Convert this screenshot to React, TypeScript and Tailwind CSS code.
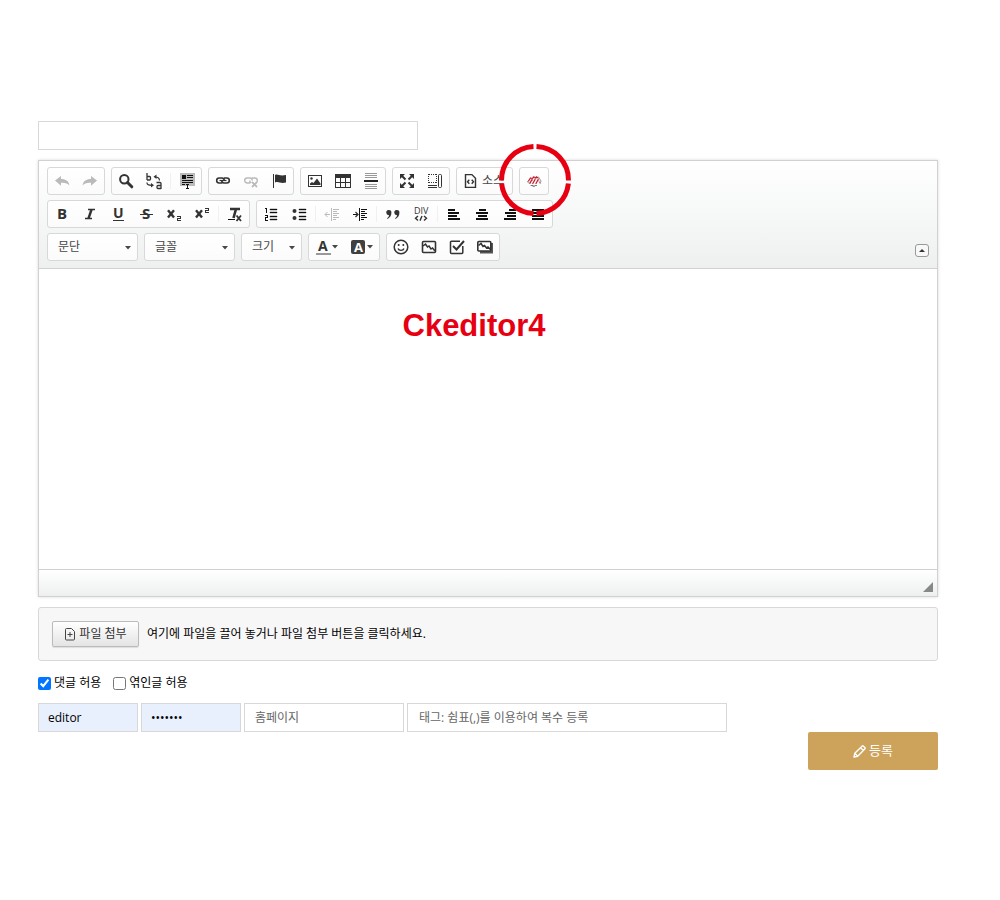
import type { ReactNode } from "react";

function Icon({ children, muted }: { children: ReactNode; muted?: boolean }) {
  return (
    <svg
      width="16"
      height="16"
      viewBox="0 0 16 16"
      fill="none"
      stroke="currentColor"
      className={`overflow-visible ${muted ? "text-[#bababa]" : "text-[#333]"}`}
      aria-hidden="true"
    >
      {children}
    </svg>
  );
}

function Solid({ d }: { d: string }) {
  return <path d={d} fill="currentColor" stroke="none" />;
}

function Crisp({ d, color }: { d: string; color?: string }) {
  return <path d={d} stroke={color ?? "currentColor"} shapeRendering="crispEdges" />;
}

function Glyph({
  x,
  y,
  size,
  children,
  bold = true,
}: {
  x: number;
  y: number;
  size: number;
  children: string;
  bold?: boolean;
}) {
  return (
    <text
      x={x}
      y={y}
      fontSize={size}
      fontWeight={bold ? 700 : 400}
      fontFamily="Open Sans, sans-serif"
      fill="currentColor"
      stroke="none"
    >
      {children}
    </text>
  );
}

function Group({ children }: { children: ReactNode }) {
  return (
    <div className="relative flex h-7 items-center rounded-[3px] border border-[#d8d8d8] bg-linear-to-b from-white to-[#fbfbfb]">
      {children}
    </div>
  );
}

function Separator() {
  return <span className="mx-[2px] h-4 w-px bg-[#f0f0f0]" />;
}

function ToolButton({
  label,
  children,
  muted,
}: {
  label: string;
  children: ReactNode;
  muted?: boolean;
}) {
  return (
    <button
      type="button"
      aria-label={label}
      disabled={muted}
      className="flex h-[26px] w-7 items-center justify-center"
    >
      <Icon muted={muted}>{children}</Icon>
    </button>
  );
}

function Caret() {
  return (
    <svg width="6" height="4" viewBox="0 0 6 4" fill="#474747" aria-hidden="true">
      <path d="M0 0h6L3 3.5z" />
    </svg>
  );
}

function ColorButton({ label, children }: { label: string; children: ReactNode }) {
  return (
    <button
      type="button"
      aria-label={label}
      className="flex h-[26px] w-[35px] items-center justify-center gap-px"
    >
      <Icon>{children}</Icon>
      <Caret />
    </button>
  );
}

function Combo({ label, wide }: { label: string; wide?: boolean }) {
  return (
    <Group>
      <select
        aria-label={label}
        className={`h-[26px] appearance-none bg-transparent pl-[10px] text-[12px] text-[#474747] outline-none ${
          wide ? "w-[89px]" : "w-[59px]"
        }`}
      >
        <option>{label}</option>
      </select>
      <span className="pointer-events-none absolute top-[12px] right-[6px]">
        <Caret />
      </span>
    </Group>
  );
}

const chain =
  "M7 10H4.2a2.4 2.4 0 0 1 0-5H7a2.4 2.4 0 0 1 2.2 2.5M9 5h2.8a2.4 2.4 0 0 1 0 5H9a2.4 2.4 0 0 1-2.2-2.5";

function Toolbar() {
  return (
    <div className="flex items-end justify-between border-b border-[#d1d1d1] bg-linear-to-b from-white to-[#eef0f0] px-2 pt-[6px] pb-[7px]">
      <div className="flex flex-col gap-[5px]">
        <div className="flex flex-wrap gap-[6px]">
          <Group>
            <ToolButton label="실행 취소" muted>
              <Solid d="M1 7.6 7 3v3c5 0 8 2.3 8.4 6.5C13.5 10.2 11 9.5 7 9.8v3z" />
            </ToolButton>
            <ToolButton label="다시 실행" muted>
              <Solid d="M15 7.6 9 3v3C4 6 1 8.3.6 12.5 2.5 10.2 5 9.5 9 9.8v3z" />
            </ToolButton>
          </Group>
          <Group>
            <ToolButton label="찾기">
              <circle cx="6.3" cy="6.3" r="4.2" strokeWidth="2" />
              <path d="m9.5 9.5 4.3 4.3" strokeWidth="3" strokeLinecap="round" />
            </ToolButton>
            <ToolButton label="바꾸기">
              <path d="M1 0v7M1 3.5h2.5q1 0 1 1V6q0 1-1 1H1" strokeWidth="1.3" />
              <path d="M10.5 9.5H14q1 0 1 1V16M15 12.5h-3q-1 0-1 1v1q0 1 1 1h3" strokeWidth="1.3" />
              <path d="M9 4c3 0 4.5 1 4.5 3.5M1 9.5v.5c0 1.500 1 2.3 5 2.3" strokeWidth="1.2" />
              <Solid d="M10.5 1.5V6L7.5 3.8zM5 10v4.500l3-2.200z" />
            </ToolButton>
            <Separator />
            <ToolButton label="전체 선택">
              <path d="M1 0h15v13H1z" fill="#bbb" stroke="none" />
              <path d="M3 2h4v4H3z" fill="#111" stroke="none" />
              <Crisp color="#111" d="M8 2.5h6M8 4.5h6M3 7.5h11M3 9.5h11M3 11.5h3M7 11.5h3M8.500 12v3M7 15.500h3" />
            </ToolButton>
          </Group>
          <Group>
            <ToolButton label="링크 삽입">
              <path d={chain} strokeWidth="1.6" />
              <path d="M4.5 7.5h7" strokeWidth="1.2" />
            </ToolButton>
            <ToolButton label="링크 지우기" muted>
              <path d={chain} strokeWidth="1.4" />
              <path d="m9 9 5 5m0-5-5 5" stroke="#fff" strokeWidth="4" />
              <path d="m9 9 5 5m0-5-5 5" strokeWidth="1.8" />
            </ToolButton>
            <ToolButton label="책갈피">
              <Crisp d="M2.5 1v14" />
              <Solid d="M4 2c3-1.5 4 1.5 11 0v7.5c-6 1.5-7-1.5-11 0z" />
            </ToolButton>
          </Group>
          <Group>
            <ToolButton label="이미지">
              <Crisp d="M1.5 2.5h13v11h-13z" />
              <circle cx="4.5" cy="5.5" r="1.2" fill="currentColor" stroke="none" />
              <Solid d="M3 12v-1.500L5 9l1.500 1L10 5.500l3.500 5V12z" />
            </ToolButton>
            <ToolButton label="표">
              <path d="M0 1h16v4H0z" fill="currentColor" stroke="none" />
              <Crisp d="M.5 1.5h15v13H.5zM0 9.500h16M5.500 5v10M10.500 5v10" />
            </ToolButton>
            <ToolButton label="가로 줄">
              <Crisp d="M2 .5h12M2 2.5h12M2 4.5h12M2 11.5h12M2 13.5h12M2 15.5h12" color="#999" />
              <path d="M1 7h14v2H1z" fill="#222" stroke="none" />
            </ToolButton>
          </Group>
          <Group>
            <ToolButton label="최대화">
              <Solid d="M1 1h5L1 6zM15 1h-5l5 5zM1 15h5l-5-5zM15 15h-5l5-5z" />
              <path d="m2.5 2.5 4 4m7-4-4 4m-7 7 4-4m7 4-4-4" strokeWidth="2" />
            </ToolButton>
            <ToolButton label="블록 보기">
              <path d="M1.5 1v9M9.5 1v9M2 1.5h8M2 9.5h8" strokeDasharray="1 1" />
              <Crisp d="M1 12.5h9M1 14.5h9" />
              <rect x="11.5" y="1.5" width="3" height="13" rx="1" />
            </ToolButton>
          </Group>
          <Group>
            <button
              type="button"
              className="flex h-[26px] w-[55px] items-center gap-1 pl-[5px] text-[12px] text-[#484848]"
            >
              <Icon>
                <path d="M3.5 1.6h6.4l3.6 3.6v9.2h-10z" strokeWidth="1.4" />
                <path d="M7.3 6.8 5.5 8.8l1.8 2M9.7 6.8l1.8 2-1.8 2" strokeWidth="1.4" />
              </Icon>
              <span className="whitespace-nowrap">소스</span>
            </button>
          </Group>
          <Group>
            <ToolButton label="에디터 플러그인">
              <g strokeLinecap="round">
                <path d="m1.500 8.500 1 1.500M12.500 4l2.500 4-.8 2.500" stroke="#999" />
                <path d="M2.500 8 4.500 5l1.500.5M3.800 10.300 7.500 4l1.500.3M6.800 10.500 10.500 4l1.300.8M10 10.500l2.300-4.200" stroke="#c4202f" strokeWidth="1.3" />
                <path d="m6 6 .5 1.500M9 5l.5 1.500M12.500 7l1.200 3" stroke="#d9868c" />
                <path d="M5 12.500h2M9 12.500h1.500M7 13.300h1.500" stroke="#777" />
              </g>
            </ToolButton>
            <svg
              width="72"
              height="72"
              viewBox="0 0 72 72"
              className="pointer-events-none absolute -top-6 -left-[21px] z-10 max-w-none"
              fill="none"
              stroke="#e60012"
              strokeWidth="5"
              aria-hidden="true"
            >
              <path d="M37.5 2.54A33.5 33.5 0 0 1 69.46 36.5M69.4 39.5A33.5 33.5 0 0 1 37.5 69.46M34.5 69.46A33.5 33.5 0 0 1 2.6 39.5M2.54 36.5A33.5 33.5 0 0 1 34.5 2.54" />
            </svg>
          </Group>
        </div>

        <div className="flex flex-wrap gap-[6px]">
          <Group>
            <ToolButton label="굵게">
              <Glyph x={3} y={13} size={15}>B</Glyph>
            </ToolButton>
            <ToolButton label="기울임꼴">
              <path d="M6 3.5h7M3 12.5h7" strokeWidth="1.4" />
              <path d="m9.5 3.5-3 9" strokeWidth="2.4" />
            </ToolButton>
            <ToolButton label="밑줄">
              <Glyph x={3} y={12} size={14}>U</Glyph>
              <Crisp d="M3 14.5h11" />
            </ToolButton>
            <ToolButton label="취소선">
              <Glyph x={4} y={13} size={15}>S</Glyph>
              <Crisp d="M2 8.5h13" />
            </ToolButton>
            <ToolButton label="아래 첨자">
              <path d="M2 4.300 8 11.500M8 4.300 2 11.500" strokeWidth="2.4" />
              <Crisp d="M11 10.500h4M14.500 11v1M11 12.500h4M11.500 13v1M11 14.500h4" />
            </ToolButton>
            <ToolButton label="위 첨자">
              <path d="M2 4.300 8 11.500M8 4.300 2 11.500" strokeWidth="2.4" />
              <Crisp d="M11 2.500h4M14.500 3v1M11 4.500h4M11.500 5v1M11 6.500h4" />
            </ToolButton>
            <Separator />
            <ToolButton label="형식 지우기">
              <path d="M3 3h10M9 3 6.5 12" strokeWidth="2.6" />
              <Crisp d="M1 13.5h7" color="#111" />
              <path d="m9.5 9.5 4.5 5.5m0-5.5L9.500 15" strokeWidth="1.8" />
            </ToolButton>
          </Group>
          <Group>
            <ToolButton label="순서 있는 목록">
              <Crisp
                color="#111"
                d="M2 2.500h2M3.500 2v5M2 9.500h3M4.500 10v1M2 11.500h3M2.500 12v2M2 14.500h3"
              />
              <path d="M7 3h7v1H7zM7 6h7v1H7zM7 10h7v1H7zM7 13h7v1H7z" fill="#111" stroke="#111" strokeWidth=".4" />
            </ToolButton>
            <ToolButton label="순서 없는 목록">
              <circle cx="3.5" cy="5" r="2" fill="currentColor" stroke="none" />
              <circle cx="3.5" cy="12" r="2" fill="currentColor" stroke="none" />
              <path d="M8 3h7v1H8zM8 6h7v1H8zM8 10h7v1H8zM8 13h7v1H8z" fill="#111" stroke="#111" strokeWidth=".4" />
            </ToolButton>
            <Separator />
            <ToolButton label="내어쓰기" muted>
              <Crisp d="M7.5 2v13M9 3.5h6M9 5.5h4M9 7.5h6M9 9.5h4M9 11.5h6M9 13.5h3M1 8.5h5" />
              <path d="M3.5 6 1 8.5 3.5 11" />
            </ToolButton>
            <ToolButton label="들여쓰기">
              <Crisp
                color="#111"
                d="M7.5 2v13M9 3.5h6M9 5.5h4M9 7.5h6M9 9.5h4M9 11.5h6M9 13.5h3M1 8.5h5"
              />
              <path d="M3.5 6 6 8.5 3.5 11" strokeWidth="1.3" />
            </ToolButton>
            <Separator />
            <ToolButton label="인용 단락">
              <Solid d="M3.7 4a2.6 2.6 0 0 1 2.7 2.8C6.4 9.5 5 11.8 2.5 13l-.4-.7c1.3-1 2-2 2-3A2.6 2.6 0 0 1 3.7 4zM11.7 4a2.6 2.6 0 0 1 2.7 2.8c0 2.7-1.4 5-3.9 6.2l-.4-.7c1.3-1 2-2 2-3A2.6 2.6 0 0 1 11.7 4z" />
            </ToolButton>
            <ToolButton label="컨테이너 만들기">
              <Glyph x={1} y={8} size={9} bold={false}>DIV</Glyph>
              <path d="M5 10 2.5 12.300 5 14.600M11 10l2.500 2.300-2.500 2.300M9 10l-2 4.600" strokeWidth="1.4" />
            </ToolButton>
            <Separator />
            <ToolButton label="왼쪽 정렬">
              <path d="M2 3h7v2H2zM2 6h11v2H2zM2 9h9v2H2zM2 12h12v2H2z" fill="#111" stroke="none" />
            </ToolButton>
            <ToolButton label="가운데 정렬">
              <path d="M5 3h7v2H5zM2 6h12v2H2zM4 9h9v2H4zM2 12h12v2H2z" fill="#111" stroke="none" />
            </ToolButton>
            <ToolButton label="오른쪽 정렬">
              <path d="M7 3h7v2H7zM3 6h11v2H3zM5 9h9v2H5zM2 12h12v2H2z" fill="#111" stroke="none" />
            </ToolButton>
            <ToolButton label="양쪽 맞춤">
              <path d="M2 3h12v2H2zM2 6h12v2H2zM2 9h12v2H2zM2 12h12v2H2z" fill="#111" stroke="none" />
            </ToolButton>
          </Group>
        </div>

        <div className="flex flex-wrap gap-[6px]">
          <Combo label="문단" wide />
          <Combo label="글꼴" wide />
          <Combo label="크기" />
          <Group>
            <ColorButton label="글자 색상">
              <Glyph x={3} y={12} size={14}>A</Glyph>
              <path d="M1 14h15v2H1z" fill="#999" stroke="none" />
            </ColorButton>
            <ColorButton label="배경 색상">
              <rect x="1" y="1" width="14" height="14" rx="2" fill="#404040" stroke="none" />
              <g className="text-white">
                <Glyph x={4} y={13} size={13}>A</Glyph>
              </g>
            </ColorButton>
          </Group>
          <Group>
            <ToolButton label="이모티콘">
              <circle cx="8" cy="8" r="6.8" strokeWidth="1.5" />
              <path d="M5 9.5c.8 2.6 5.2 2.6 6 0" strokeWidth="1.3" />
              <circle cx="5.7" cy="6" r="1" fill="currentColor" stroke="none" />
              <circle cx="10.3" cy="6" r="1" fill="currentColor" stroke="none" />
            </ToolButton>
            <ToolButton label="이미지 갤러리">
              <rect x="1.5" y="2.5" width="13" height="11" rx="1" strokeWidth="1.6" />
              <path d="m2 7 2.5-2 2 3L8 7l2 3 1.500-1L14 12" strokeWidth="1.5" />
            </ToolButton>
            <ToolButton label="설문조사">
              <path d="M11 2.200H2.500a1 1 0 0 0-1 1v10.300a1 1 0 0 0 1 1h10.300a1 1 0 0 0 1-1V7" strokeWidth="1.5" />
              <path d="m4 7 3.5 3.5L15 2" strokeWidth="2" />
            </ToolButton>
            <ToolButton label="멀티미디어">
              <path d="M3 12h11V4h2v10.500H3z" fill="#555" stroke="none" />
              <rect x=".8" y="2.5" width="13" height="9.5" rx="1" fill="#fff" strokeWidth="1.6" />
              <path d="m1.500 6.500 2.500-2 2 3 1.500-1 2 2.500 1.500-1 2.500 2.500" strokeWidth="1.6" />
            </ToolButton>
          </Group>
        </div>
      </div>

      <button
        type="button"
        aria-label="툴바 줄이기"
        className="mb-1 flex h-[13px] w-[14px] items-center justify-center rounded-[3px] border border-[#999] bg-[#f8f8f8]"
      >
        <svg width="6" height="3" viewBox="0 0 6 3" fill="#333" aria-hidden="true">
          <path d="M0 3h6L3 0z" />
        </svg>
      </button>
    </div>
  );
}

function Editor() {
  return (
    <section className="mt-[10px] border border-[#d1d1d1] shadow-[0_0_3px_rgba(0,0,0,0.15)]">
      <Toolbar />
      <div className="min-h-[300px] bg-white pt-[39px] pr-7 text-center">
        <h1 className="font-['Liberation_Sans',Arial,sans-serif] text-[31px] leading-9 font-bold text-[#e60012]">
          Ckeditor4
        </h1>
      </div>
      <div className="flex h-[27px] items-end justify-end border-t border-[#d1d1d1] bg-linear-to-b from-white to-[#eef0f0] px-1 pb-1">
        <svg width="10" height="10" viewBox="0 0 10 10" fill="#888" aria-hidden="true">
          <path d="M10 0v10H0z" />
        </svg>
      </div>
    </section>
  );
}

const field =
  "h-[29px] min-w-0 border border-[#d8d8d8] text-[12px] outline-none placeholder:text-[#666]";

export default function App() {
  return (
    <form
      className="flex flex-col bg-white pt-[121px] pr-[62px] pl-[38px] font-['Open_Sans','Noto_Sans_CJK_KR',sans-serif] text-[12px] text-black"
      onSubmit={(e) => e.preventDefault()}
    >
      <input type="text" aria-label="제목" className={`${field} w-[380px] px-[10px]`} />

      <Editor />

      <div className="mt-[10px] flex h-[54px] items-center gap-2 rounded-[3px] border border-[#d8d8d8] bg-[#f7f7f7] px-[13px]">
        <button
          type="button"
          className="flex h-[26px] w-[87px] items-center justify-center gap-[3px] rounded-[2px] border border-[#bbb] bg-linear-to-b from-white to-[#e4e4e4] text-[#333] shadow-[0_1px_1px_rgba(0,0,0,0.1)]"
        >
          <svg width="12" height="13" viewBox="0 0 12 13" fill="none" stroke="#444" aria-hidden="true">
            <path d="M2.5.5h5l3 3V11a1 1 0 0 1-1 1h-7a1 1 0 0 1-1-1V1.500a1 1 0 0 1 1-1z" />
            <path d="M6 4v5M3.5 6.500h5" />
          </svg>
          <span className="whitespace-nowrap">파일 첨부</span>
        </button>
        <span>여기에 파일을 끌어 놓거나 파일 첨부 버튼을 클릭하세요.</span>
      </div>

      <div className="mt-3 flex h-5 items-center gap-3">
        <label className="flex items-center gap-[3px]">
          <input type="checkbox" defaultChecked className="h-[13px] w-[13px]" />
          댓글 허용
        </label>
        <label className="flex items-center gap-[3px]">
          <input type="checkbox" className="h-[13px] w-[13px]" />
          엮인글 허용
        </label>
      </div>

      <div className="mt-[10px] flex gap-[3px]">
        <input
          type="text"
          aria-label="글쓴이"
          defaultValue="editor"
          className={`${field} w-[100px] bg-[#e8f0fe] px-[9px]`}
        />
        <input
          type="password"
          aria-label="비밀번호"
          defaultValue="editor4"
          className={`${field} w-[100px] bg-[#e8f0fe] px-[9px]`}
        />
        <input
          type="text"
          aria-label="홈페이지"
          placeholder="홈페이지"
          className={`${field} w-[160px] px-[10px]`}
        />
        <input
          type="text"
          aria-label="태그"
          placeholder="태그: 쉼표(,)를 이용하여 복수 등록"
          className={`${field} w-[320px] px-[11px]`}
        />
      </div>

      <button
        type="submit"
        className="flex h-[38px] w-[130px] items-center justify-center gap-[3px] self-end rounded-[2px] bg-[#cda35b] text-[13px] text-white"
      >
        <svg width="13" height="13" viewBox="0 0 13 13" fill="none" stroke="currentColor" strokeWidth="1.4" strokeLinejoin="round" aria-hidden="true">
          <path d="M1 12l.8-3.7L9 1.2a1 1 0 0 1 1.4 0l1.4 1.4a1 1 0 0 1 0 1.4l-7.100 7.200zM7.500 2.700l2.800 2.800M2 8.500l2.500 2.500" />
        </svg>
        등록
      </button>
    </form>
  );
}
